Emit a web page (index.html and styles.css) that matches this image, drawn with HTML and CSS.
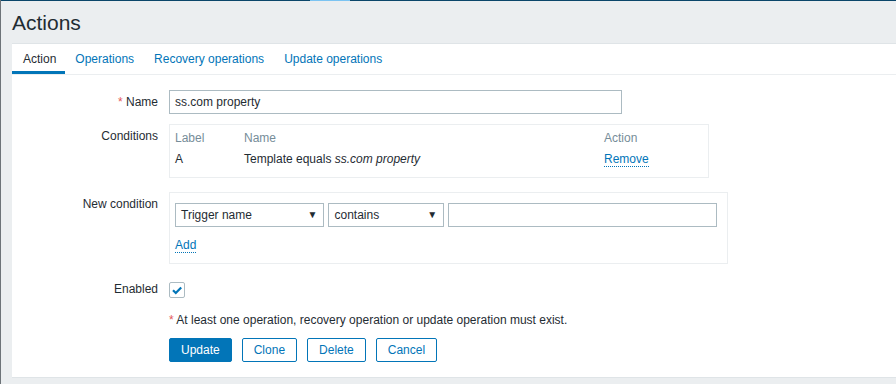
FILE: index.html
```html
<!DOCTYPE html>
<html lang="en">
<head>
    <meta charset="UTF-8">
    <meta name="viewport" content="width=device-width, initial-scale=1.0">
    <title>Actions</title>
    <link rel="stylesheet" href="styles.css">
</head>
<body>
    <div class="topbar"><span class="topbar-mark"></span></div>
    <header class="page-header">
        <h1>Actions</h1>
    </header>

    <div class="panel">
        <ul class="tabs">
            <li class="tab active">Action</li>
            <li class="tab">Operations</li>
            <li class="tab">Recovery operations</li>
            <li class="tab">Update operations</li>
        </ul>

        <form class="form">
            <div class="row row-name">
                <label class="row-label" for="name"><span class="req">*</span> Name</label>
                <div class="row-field">
                    <input id="name" class="text-input name-input" type="text" value="ss.com property">
                </div>
            </div>

            <div class="row row-conditions">
                <div class="row-label">Conditions</div>
                <div class="row-field">
                    <div class="box conditions-box">
                        <table class="cond-table">
                            <thead>
                                <tr>
                                    <th class="col-label">Label</th>
                                    <th class="col-name">Name</th>
                                    <th class="col-action">Action</th>
                                </tr>
                            </thead>
                            <tbody>
                                <tr>
                                    <td>A</td>
                                    <td>Template equals <em>ss.com property</em></td>
                                    <td><a class="link" href="#">Remove</a></td>
                                </tr>
                            </tbody>
                        </table>
                    </div>
                </div>
            </div>

            <div class="row row-newcond">
                <div class="row-label">New condition</div>
                <div class="row-field">
                    <div class="box newcond-box">
                        <div class="newcond-line">
                            <span class="select select-type">Trigger name</span>
                            <span class="select select-op">contains</span>
                            <input class="text-input value-input" type="text">
                        </div>
                        <div class="newcond-add">
                            <a class="link" href="#">Add</a>
                        </div>
                    </div>
                </div>
            </div>

            <div class="row row-enabled">
                <div class="row-label">Enabled</div>
                <div class="row-field">
                    <span class="checkbox">
                        <svg width="16" height="16" viewBox="0 0 16 16">
                            <path d="M4 8.2 L6.8 11 L12.2 5.4" fill="none" stroke="#0275b8" stroke-width="2.2"/>
                        </svg>
                    </span>
                </div>
            </div>

            <div class="row row-note">
                <div class="row-label"></div>
                <div class="row-field note"><span class="req">*</span> At least one operation, recovery operation or update operation must exist.</div>
            </div>

            <div class="row row-buttons">
                <div class="row-label"></div>
                <div class="row-field buttons">
                    <button type="button" class="btn btn-main">Update</button>
                    <button type="button" class="btn">Clone</button>
                    <button type="button" class="btn">Delete</button>
                    <button type="button" class="btn">Cancel</button>
                </div>
            </div>
        </form>
    </div>
</body>
</html>
```

FILE: styles.css
```css
body {
    margin: 0;
    font-family: "Liberation Sans", Arial, sans-serif;
    font-size: 12px;
    color: #1f2c33;
    background-color: #ebeef0;
    border-left: 1px solid #6d7378;
    height: 384px;
    overflow: hidden;
}
.topbar {
    height: 1px;
    background-color: #0a466a;
    padding-left: 309px;
}
.topbar-mark {
    display: block;
    width: 40px;
    height: 1px;
    background-color: #7cc4f2;
}
.page-header {
    padding: 10px 11px 8px;
}
h1 {
    margin: 0;
    font-size: 21px;
    font-weight: normal;
    line-height: 24px;
}
.panel {
    margin-left: 11px;
    width: 900px;
    background-color: #fff;
    border-top: 1px solid #dfe4e7;
    border-bottom: 1px solid #dfe4e7;
}
.tabs {
    list-style: none;
    margin: 0;
    padding: 0;
    display: flex;
    border-bottom: 1px solid #ebeef0;
}
.tab {
    padding: 0 10px 0 10px;
    height: 27px;
    line-height: 30px;
    border-bottom: 3px solid transparent;
    color: #0275b8;
}
.tab.active {
    padding: 0 9px 0 11px;
    color: #1f2c33;
    border-bottom-color: #0275b8;
}
.form {
    padding: 15px 0 15px;
}
.row {
    display: flex;
}
.row-label {
    width: 146px;
    flex: none;
    text-align: right;
    line-height: 24px;
    margin-right: 11px;
}
.req {
    color: #e45959;
}
.row-name {
    margin-bottom: 10px;
}
.row-conditions {
    margin-bottom: 14px;
}
.row-newcond {
    margin-bottom: 13px;
}
.row-enabled {
    margin-bottom: 7px;
    align-items: center;
}
.row-note {
    margin-bottom: 6px;
}
.text-input {
    box-sizing: border-box;
    height: 24px;
    border: 1px solid #acbbc2;
    padding: 0 5px;
    font-family: inherit;
    font-size: 12px;
    color: #1f2c33;
    background: #fff;
    margin: 0;
    outline: none;
}
.name-input {
    width: 453px;
}
.box {
    box-sizing: border-box;
    border: 1px solid #ebeef0;
}
.conditions-box {
    width: 540px;
    padding: 5px 5px 10px;
}
.cond-table {
    border-collapse: collapse;
    width: 100%;
}
.cond-table th {
    text-align: left;
    font-weight: normal;
    color: #768d99;
    line-height: 16px;
    padding: 0;
}
.cond-table td {
    line-height: 16px;
    padding: 5px 0 0;
}
.col-label {
    width: 69px;
}
.col-name {
    width: 360px;
}
.link {
    color: #0275b8;
    text-decoration: none;
    border-bottom: 1px dotted #0275b8;
}
.newcond-box {
    width: 559px;
    padding: 10px 10px 10px 5px;
}
.newcond-line {
    display: flex;
    gap: 4px;
}
.select {
    box-sizing: border-box;
    position: relative;
    display: block;
    height: 24px;
    line-height: 22px;
    border: 1px solid #acbbc2;
    padding: 0 5px;
}
.select::after {
    content: "\25BC";
    position: absolute;
    right: 6px;
    top: 0;
    font-size: 10px;
    color: #1f2c33;
}
.select-type {
    width: 150px;
}
.select-op {
    width: 116px;
}
.value-input {
    width: 270px;
}
.newcond-add {
    margin-top: 10px;
    line-height: 16px;
}
.checkbox {
    display: block;
    box-sizing: border-box;
    width: 16px;
    height: 16px;
    border: 1px solid #acbbc2;
    border-radius: 2px;
    margin-top: 1px;
}
.checkbox svg {
    display: block;
    margin: -1px;
}
.note {
    line-height: 24px;
}
.buttons {
    display: flex;
    gap: 10px;
}
.btn {
    box-sizing: border-box;
    height: 24px;
    padding: 0 11px;
    font-family: inherit;
    font-size: 12px;
    color: #0275b8;
    background-color: #fff;
    border: 1px solid #0275b8;
    border-radius: 2px;
    cursor: pointer;
}
.btn-main {
    color: #fff;
    background-color: #0275b8;
}
```
